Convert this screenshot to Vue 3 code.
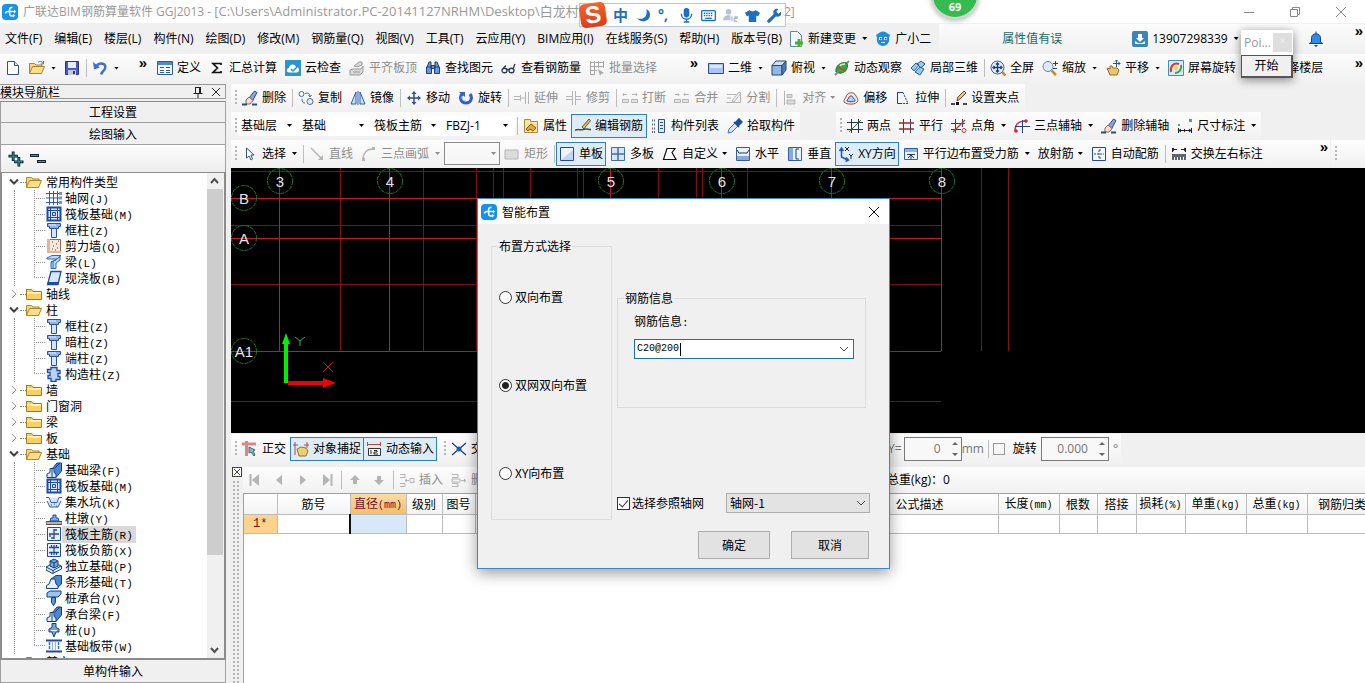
<script setup>
import { ref } from 'vue'

const B = '#2f5b9d'
const G = '#b4b4b4'
const folderOpen = '<path d="M.5 13.500V3.500h5l1.500 1.500h6v2" fill="#f5d682" stroke="#b08326"/><path d="M.5 13.500l3-7h12l-3 7z" fill="#fbe08a" stroke="#b08326"/>'
const column = '<path d="M1.500 1.500h13v3h-2v2h-9v-2h-2z" fill="#8fb4ee" stroke="#28509c"/><path d="M5.500 6.500h5v9h-5z" fill="#d6e6ff" stroke="#28509c"/><path d="M3 3h7" stroke="#e8f2ff"/>'
const raft = '<path d="M1.500 1.500h13v13h-13z" fill="#dceaff" stroke="#1c4ba0" stroke-width="2"/><path d="M4.500 1v14M11.500 1v14M1 4.500h14M1 11.500h14M6.500 6.500h3v3h-3z" fill="none" stroke="#1c4ba0"/>'
const beam = '<path d="M6 15.500V7l5-6h4.500v8L10 15.500z" fill="#4d86cf" stroke="#123f86"/><path d="M1 15.500V12l3-1.500V6.500h4v4l2 1.500v3.500z" fill="#d9ebff" stroke="#123f86"/><path d="M6 7v8M9 6l5-5" stroke="#123f86"/>'
const brush = '<path d="M7 8l5.500-7 2.500 1.500L10.500 11z" fill="#8fa0dd" stroke="#3a4a80"/><path d="M4 10l3-3 4 3.500L8 14H4z" fill="#f5e2bd" stroke="#8a6070"/><path d="M0 14.500h5M10 14.500h5" stroke="#274b8f" stroke-width="2"/>'
const icons = {
  logo: '<rect width="16" height="16" rx="4" fill="#1493ea"/><path d="M3.500 9.500C3.500 8 4.500 7.500 6 7.500h7M10.500 3.500c-3-.5-3 1.500-3 4s0 5 3.500 4.500" fill="none" stroke="#fff" stroke-width="1.500"/><path d="M11 10l2.500 1.500L11 13.500zM12 5.500l2 2-2 2z" fill="#fff"/>',
  new: '<path d="M2.500 1.500h7l4 4v9h-11z" fill="#fff" stroke="#39507e"/><path d="M9.500 1.500v4h4" fill="#cfe0f7" stroke="#39507e"/>',
  open: folderOpen + '<path d="M9 2.500c2-2 4-1 5 1M14.500 1v3h-3" fill="none" stroke="#4a78b8"/>',
  save: '<path d="M1.500 1.500h13v13h-13z" fill="#4a5ac0" stroke="#2a3478"/><path d="M4 2h8v6H4z" fill="#e6ecff"/><path d="M4 10h8v5H4z" fill="#c5cbe0"/><path d="M9 11h2v3H9z" fill="#2a3478"/>',
  undo: '<path d="M4 6.500c4-5 11-3 9 2-.5 2-3 3-4 6" fill="none" stroke="#3f6fd0" stroke-width="2.500"/><path d="M1 2l1 7.500 6-2z" fill="#3f6fd0"/>',
  define: '<path d="M.5 1.500h15v13H.5z" fill="#f4f9ff" stroke="#2f5b9d"/><path d="M1 2h14v3H1z" fill="#4d86d1"/><path d="M3 7.500h4M3 10.500h4M3 12.500h4M9 7.500h4M9 10.500h4M9 12.500h4" stroke="#2f5b9d"/>',
  sum: '<path d="M12 5V3.500H4l4.500 4.500L4 12.500h8V11" fill="none" stroke="#111" stroke-width="1.700"/>',
  cloud: '<path d="M0 0h16v16H0z" fill="#2b95cd"/><path d="M4 12.500c-3 0-3-4 0-4.500 0-4 6-5 7-1 4 0 4 5 1 5.500z" fill="#fff"/><path d="M6 9l2 2 4-4" fill="none" stroke="#2b95cd" stroke-width="1.500"/>',
  align: '<path d="M1 10l3-1h8l2-3v6l-3 3H1zM5 6l5-4h3v3L8 7z" fill="#d8d8d8" stroke="#9d9d9d"/><path d="M4 12h7" stroke="#9d9d9d"/>',
  find: '<path d="M2 7l2-5h2v5M10 7V2h2l2 5M1.500 7h5v6.500h-5zM9.500 7h5v6.500h-5zM6 5.500h4v3H6z" fill="#6c98d4" stroke="#1d3f7c"/>',
  glass: '<path d="M1 10.500c0-3 5-3 5 0s-5 3-5 0zM8 10.500c0-3 5-3 5 0s-5 3-5 0zM6 9.500h2M2 8.500l3-3M12 9l2-5" fill="none" stroke="#2b3650" stroke-width="1.300"/>',
  batch: '<path d="M1.500 1v14M5.500 1v14M9.500 1v7M1 2.500h13M1 6.500h13M1 10.500h7M1 14.500h5M14.500 1v7" fill="none" stroke="#a9a9a9"/><path d="M9 9l6 4-3 1-1 2z" fill="#a9a9a9"/>',
  rect2d: '<path d="M.5 3.500h15v10H.5z" fill="#a8c4fa" stroke="#2d4a9a"/><path d="M2 5h12v3H2z" fill="#dbe7ff"/>',
  cube: '<path d="M1 5.500L5 1h10l-4 4.500z" fill="#cfe3f7" stroke="#27496f"/><path d="M1 5.500h10V15H1z" fill="#8db9e4" stroke="#27496f"/><path d="M11 5.500L15 1v9l-4 5z" fill="#4e80b5" stroke="#27496f"/>',
  orbit: '<path d="M2 12C1 6 7 1 13 3c2 6-3 11-8 10z" fill="#35a84a" stroke="#1d6b33"/><path d="M13 3l2-2M1 15l3-3" stroke="#8a8a8a" stroke-width="2"/><path d="M4 7l8 4" stroke="#c4472e" stroke-width="1.500"/><path d="M6 6c1-2 3-2 5-2" fill="none" stroke="#c8f3b2" stroke-width="1.500"/>',
  local3d: '<path d="M1 8l5-5 3 2-5 6zM7 4l4-3 4 3-4 4zM5 12l5-5 4 2-4 6z" fill="#9cc7e8" stroke="#245d91"/>',
  full: '<circle cx="7.500" cy="7.500" r="6.500" fill="#e2effc" stroke="#426191"/><path d="M12 12l3.500 3.500" stroke="#c98a35" stroke-width="2.500"/><path d="M3 7.500h9M7.500 3v9M6 4.500l1.500-1.500L9 4.500M6 10.500L7.500 12 9 10.500M4.500 6L3 7.500 4.500 9M10.500 6L12 7.500 10.500 9" fill="none" stroke="#203f78" stroke-width="1.300"/>',
  zoom: '<circle cx="6" cy="6.500" r="5" fill="#dcebf7" stroke="#6781a0"/><path d="M9.500 10.500L14 15" stroke="#c98a35" stroke-width="2.500"/><path d="M13.500 1v5M11 3.500h5M11 8.500h4" stroke="#203f78"/>',
  pan: '<path d="M2 8l3 1V6h2l1 2h4l2 2-2 5H5z" fill="#ecc568" stroke="#94682b"/><path d="M11.500 0v7M8 3.500h7M10 1.500L11.500 0 13 1.500M13.500 2L15 3.500 13.500 5" fill="none" stroke="#334d80"/>',
  rotscr: '<path d="M.5.5h15v15H.5z" fill="#d4ebfa" stroke="#3f8ccb"/><path d="M3 12C2 6 6 2 11 4" fill="none" stroke="#d43c2e" stroke-width="2"/><path d="M13 5c1 5-2 8-6 8" fill="none" stroke="#3da13d" stroke-width="2"/><path d="M6 6h4v4H6z" fill="#f6d06a"/>',
  brush,
  copy: '<circle cx="3.500" cy="4" r="2.500" fill="#fff" stroke="#4c6a8c"/><circle cx="12" cy="11.500" r="3" fill="#e3eefa" stroke="#4c6a8c"/><path d="M7 3.500c3-1 5 0 5 3M10.500 5L12 7l1.500-2M4 9c0 3 1 4 3 4" fill="none" stroke="#4c6a8c"/>',
  mirror: '<path d="M6 2v12H1zM10 2v12h5z" fill="#cfe2fa" stroke="#2a5caa"/><path d="M8 1v14" stroke="#2a5caa"/>',
  move: '<path d="M8 2v12M2 8h12" stroke="#31517f" stroke-width="1.500"/><path d="M8 1l2.500 3h-5zM8 15l2.500-3h-5zM1 8l3-2.500v5zM15 8l-3-2.500v5z" fill="#31517f"/>',
  rotate: '<path d="M4 4c-3 4-1 9 4 9s7-5 4-9" fill="none" stroke="#2f62c4" stroke-width="3"/><path d="M1 2h6v5z" fill="#2f62c4"/><path d="M4 6c-1 3 1 5 4 5" fill="none" stroke="#9bc0f6"/>',
  extend: `<path d="M0 6.500h6M0 9.500h6M7 8h4M11.500 2v12M14.500 2v12M6.500 5v6" stroke="${G}" fill="none"/>`,
  trim: `<path d="M0 6.500h6M0 9.500h6M10 6.500h5M10 9.500h5M6.500 1v14M9.500 1v14" stroke="${G}" fill="none"/>`,
  brk: `<path d="M1 4.500h4M2 3L1 4.500 2 6M10 4.500h5M14 3l1 1.500L14 6M.5 9.500h6v3h-6zM9.500 9.500h6v3h-6z" stroke="${G}" fill="#e4e4e4"/>`,
  join: `<path d="M1 4.500h4M4 3l1 1.500L4 6M10 4.500h5M11 3l-1 1.500L11 6M.5 9.500h6v3h-6zM8.500 9.500h6v3h-6z" stroke="${G}" fill="#e4e4e4"/>`,
  split: `<path d="M.5 4.500h10M.5 12.500h14v-8M6 11l7-9 2 1-7 9zM1 8h4" stroke="${G}" fill="none"/>`,
  alignv: `<path d="M2.500 1v14M5 4.500h5v3H5zM5 10h8v4H5z" stroke="${G}" fill="#d8d8d8"/>`,
  offset: '<path d="M1 12c0-3 1-3 2-5 1-5 8-6 10-1 1 2 2 3 2 5-2 4-11 4-14 1z" fill="#fbe4e4" stroke="#8b5560"/><path d="M4 11c0-2 2-2 2-4 2-2 4-1 4 1 2 1 2 2 2 3-2 1-6 1-8 0z" fill="#b7cfee" stroke="#31517f"/>',
  stretch: '<path d="M8 2.500H2.500v11H7" fill="none" stroke="#203f78"/><path d="M8 2.500l5 11H7" stroke="#203f78" stroke-dasharray="2 1" fill="none"/>',
  grip: '<path d="M6 11l1-4 6-6 2 2-6 6z" fill="#e5c98a" stroke="#5b4a2a"/><path d="M0 14h4M12 14h4" stroke="#111" stroke-width="1.500"/><path d="M5 12h3v3H5z" fill="#111"/>',
  prop: '<path d="M1.500 1.500h6v2h7v11h-13z" fill="#fbe3a0" stroke="#b08a3a"/><path d="M3 11l5-5 5 4-3 3-3-2-2 2z" fill="#e9a93c" stroke="#7c5718"/>',
  edit: '<path d="M7 9l7-8 1.500 1.500L9 11z" fill="#e2ba63" stroke="#6d5523"/><path d="M0 12.500c3-2 5 0 8-1s5 0 8 0" fill="none" stroke="#2c5a38" stroke-width="1.500"/>',
  list: '<path d="M1 2.500h4M1 6.500h4M1 10.500h4M1 14h4" stroke="#46689a" stroke-dasharray="1 1" stroke-width="2"/><path d="M7.500 1.500h6v13h-6z" fill="#dbe8fa" stroke="#31517f"/><path d="M9 4.500h3M9 7.500h3M9 10.500h3" stroke="#31517f"/>',
  pick: '<path d="M1 15l1-4 6-6 3 3-6 6z" fill="#d5e8fb" stroke="#3c74b4"/><path d="M7 4l5 5M9 4l3-3 3 3-3 3z" fill="#1d4f96" stroke="#1d4f96" stroke-width="1.500"/>',
  twopt: '<path d="M4.500 1v14M11.500 1v14M0 4.500h16M0 11.500h16" stroke="#27364f"/><path d="M2 14L14 2" stroke="#4a6a4a"/>',
  par: '<path d="M4.500 1v14M11.500 1v14" stroke="#31405a"/><path d="M0 5h15M0 11h15" stroke="#a3262a" stroke-width="1.300"/>',
  angle: '<path d="M4.500 1v14M0 5.500h14M0 11.500h10M11.500 1v8" stroke="#27408a"/><path d="M2 14L14 2" stroke="#c0392b" stroke-width="1.300"/><circle cx="13" cy="12.500" r="2" fill="none" stroke="#c0392b"/>',
  three: '<path d="M1 13c0-7 3-10 11-10" fill="none" stroke="#cc2b36" stroke-width="1.500"/><path d="M8.500 2v13M1 8.500h15" stroke="#27408a"/><circle cx="12" cy="3" r="1.800" fill="#cc2b36"/><circle cx="2" cy="13" r="1.800" fill="#cc2b36"/>',
  dim: '<path d="M1 6h2v2H1zM12 1h3v3h-3z" fill="#58a85a"/><path d="M1.500 10v5M14.500 10v5M2 12.500h12M4 11l-2 1.500L4 14M12 11l2 1.500-2 1.500M7.500 11v3" fill="none" stroke="#222"/>',
  cursor: '<path d="M4.500 2v10l2.500-2 2 4 1.500-1-1.500-4h3z" fill="#fff" stroke="#31517f"/>',
  line: `<path d="M2 2l10 10" stroke="${G}" stroke-width="1.500"/><path d="M14 14v-5l-5 5z" fill="${G}"/>`,
  arc: `<path d="M2 14C2 7 6 3 12 3" fill="none" stroke="${G}" stroke-width="1.500"/><path d="M1 12h3v3H1zM11 1h3v3h-3z" fill="${G}"/>`,
  rectg: `<path d="M1 4h13v9H1z" fill="#dcdcdc" stroke="${G}"/>`,
  single: '<path d="M1.500 1.500h13v13h-13z" fill="#eef4ff" stroke="#2346a0"/><path d="M2 14L14 4v10z" fill="#c0d4fb"/>',
  multi: '<path d="M1.500 1.500h13v13h-13z" fill="#d4e6fb" stroke="#416fa8"/><path d="M8 1v14M1 8h14" stroke="#416fa8" stroke-width="1.500"/>',
  poly: '<path d="M5 2.500h8l-3 4 4 7H1.500z" fill="#fff" stroke="#111" stroke-width="1.200"/>',
  horiz: '<path d="M1.500 1.500h13v13h-13z" fill="#e9f2ff" stroke="#3b5d9b"/><path d="M2 10h12v4H2z" fill="#85a9e0"/><path d="M2 4l2 3h8l2-3" fill="none" stroke="#223a6c"/>',
  vert: '<path d="M1.500 1.500h13v13h-13z" fill="#e9f2ff" stroke="#3b5d9b"/><path d="M2 2h4v12H2z" fill="#85a9e0"/><path d="M12 3H9v10h3" fill="none" stroke="#223a6c"/>',
  xy: '<path d="M3.500 3v8l6 3M1.500 5l2-3 2 3M8 11.500l2.500 2.500-3 1.500" fill="none" stroke="#2456b8" stroke-width="1.500"/><path d="M7 1l4 4M11 1L7 5M11 8l2 2 2-2M13 10v3" fill="none" stroke="#222"/>',
  edge: '<path d="M1.500 2.500h13v11h-13z" fill="#e9f2ff" stroke="#3b5d9b"/><path d="M2 3h12v3H2z" fill="#8fb0e8"/><path d="M4 8.500h8M8 9v4M5 12l3-3 3 3" fill="none" stroke="#223a6c"/>',
  auto: '<path d="M1.500 1.500h13v13h-13z" fill="#f4f8ff" stroke="#2346a0"/><path d="M8 4v8M8 4h3M8 12h3M3 8h10" fill="none" stroke="#2346a0" stroke-dasharray="2 1"/>',
  swap: '<path d="M1.500 2v4M14.500 2v4M2 3.500h4M10 3.500h4M3 2L1 3.500 3 5M13 2l2 1.500L13 5" fill="none" stroke="#222"/><path d="M1 8h14v6H1z" fill="#5c6673"/><path d="M3.500 11v3M6.500 11v3M9.500 11v3M12.500 11v3" stroke="#fff"/>',
  change: '<path d="M2.500.5h7l4 4v11h-11z" fill="#f4fbff" stroke="#5f87ad"/><path d="M11 8v8M7 12h8" stroke="#48b02c" stroke-width="3"/>',
  mascot: '<path d="M1 4l3-2c3-2 5-2 8 0l3 2-1 3c1 4-2 8-6 8s-7-4-6-8z" fill="#1c8fdc"/><path d="M4 6h3v3H4zM9 6h3v3H9z" fill="#fff"/><path d="M5 7h1.500v1.500H5zM10 7h1.500v1.500H10z" fill="#114a86"/><path d="M6 11.500h4" stroke="#fff"/>',
  user: '<rect width="16" height="16" rx="2" fill="#3887b8"/><path d="M6 3h4v4h2l-4 4-4-4h2zM3 10l3 2h4l3-2v3H3z" fill="#fff"/>',
  bell: '<path d="M8 .5v2M3.500 11V6.500C4 1.500 12 1.500 12.500 6.500V11l2 1.500h-13z" fill="#2b8cf0" stroke="#1c3f8c"/><path d="M6 14h4l-2 2z" fill="#1c3f8c"/>',
  plus: '<path d="M5.500 0v10M.5 5h10M11.500 6v10M6.500 11h10" stroke="#123" stroke-width="3"/><path d="M5.500 1v8M1.500 5h8M11.500 7v8M7.500 11h8" stroke="#2fa29a"/>',
  minus: '<path d="M0 4.500h9M7 10.500h9" stroke="#123" stroke-width="3"/><path d="M1 4.500h7M8 10.500h7" stroke="#2fa29a"/>',
  folder: '<path d="M.5 13.500v-10h5l1.500 2h8.500v8z" fill="#fbcf5e" stroke="#a67a20"/><path d="M1 7h14" stroke="#fff1b8" stroke-width="2"/>',
  fopen: folderOpen,
  axis: '<path d="M3.500 1v14M7.500 1v14M11.500 1v14M0 3.500h13M0 8h13M0 12.500h13" stroke="#2c5dae"/><path d="M13 2h3v3h-3zM13 6.500h3v3h-3zM13 11h3v3h-3z" fill="#6c94d4"/>',
  raft, column,
  wall: '<path d="M1.500 1.500h13v13h-13z" fill="#f7e9df" stroke="#a5623e"/><path d="M1 1h3v14H1zM1 13h14v2H1z" fill="#ddb79c"/><path d="M6 4h1M10 6h1M7 8h1M11 10h1M6 11h1M12 3h1M9 12h1" stroke="#444"/>',
  lbeam: '<path d="M1 4l5-2.500h9L11 5H1zM5 8l6-3 3-3v4l-4 3v5.500H5z" fill="#b9dcff" stroke="#2a6bb8"/><path d="M7 7v7M5 8l5-2" stroke="#2a6bb8"/>',
  slab: '<path d="M5 1.500h10l-3 13H1.500z" fill="#d4e8ff" stroke="#1c4ba0" stroke-width="1.300"/><path d="M2 13h10" stroke="#1c4ba0" stroke-width="2"/>',
  gz: '<path d="M5 1.500h6v3h3v3h-2v3h2v3h-4v2H5v-3H2v-3h2v-3H1.500v-3H5z" fill="#b8d2f7" stroke="#1c4ba0" stroke-width="1.300"/>',
  beam,
  pit: '<path d="M0 3.500h3l2 5h6l2-5h3M1 7l3 6h8l3-6" fill="#d4e6fb" stroke="#2f5fae"/><path d="M5 11h1M8 10h1M10 12h1" stroke="#1c4ba0"/>',
  pier: '<path d="M0 11.500h16v3H0z" fill="#b9b3a6" stroke="#5b564b"/><path d="M4 11l1-3h2V5h3v3h2l1 3z" fill="#7fb0e8" stroke="#1c4ba0"/>',
  mainbar: '<path d="M1.500 1.500h13v13h-13z" fill="#eaf2ff" stroke="#1c4ba0"/><path d="M8 3v10M3 8h10M8 4h3M4 8v3M8 12H5" fill="none" stroke="#1c4ba0" stroke-width="1.300"/>',
  negbar: '<path d="M1.500 1.500h13v13h-13z" fill="#eaf2ff" stroke="#1c4ba0"/><path d="M3 5.500h10M3 10.500h10M5.500 3v3M10.500 3v3M5.500 10v3M8 3v10M10.500 10v3" fill="none" stroke="#1c4ba0" stroke-width="1.300"/>',
  iso: '<path d="M0 9l8-4 7.500 3v3l-9 4.500L0 12z" fill="#d9ebff" stroke="#123f86"/><path d="M4 3l4-2 4 2v5L8 10 4 8z" fill="#6fa4e6" stroke="#123f86"/><path d="M0 9l7 3.500L15 8M7 12.500v3M8 5v5M4 3l4 2 4-2" fill="none" stroke="#123f86"/>',
  strip: '<path d="M5 5l5-3.500h5.500V10L11 14z" fill="#4d86cf" stroke="#123f86"/><path d="M.5 14.500v-3L3 10l2-5h4l1 5 2 1.500v3z" fill="#e5f0ff" stroke="#123f86"/>',
  cap: '<path d="M1 3l3-2h11v3l-3 3H1z" fill="#9dc3ef" stroke="#123f86"/><path d="M5.500 7.500h4v5l-2 3-2-3z" fill="#5c94da" stroke="#123f86"/>',
  pile: '<path d="M6 1.500h4v4l3 1.500v3h-3l-2 5-2-5H3V7l3-1.500z" fill="#6fa4e6" stroke="#123f86"/><path d="M5 8.500h6" stroke="#fff"/>',
  band: '<path d="M0 2.500h16M0 13.500h16" stroke="#1c4ba0" stroke-width="2"/><path d="M3.500 4v8M12.500 4v8" stroke="#2f74d0" stroke-dasharray="3 1" stroke-width="1.500"/><path d="M6.500 4v8M9.500 4v8" stroke="#8fb4ee"/>',
  ortho: '<path d="M0 3h14M4.500 0v15" stroke="#d58a8a" stroke-width="3"/><path d="M7 6l6 3-2 1 2 4-1 1-3-4-2 1z" fill="#8fb5c9" stroke="#466"/>',
  snap: '<path d="M2 1v13M14 1v6M0 4h5M11 4h5" stroke="#b94a3a"/><path d="M4 8l4-2 5 1 2 3-2 5H6z" fill="#edcf6c" stroke="#96742b"/>',
  dyn: '<path d="M1 3.500h14M1.500 1v4M14.500 1v4" stroke="#b94a3a"/><path d="M2.500 7.500h12v7h-12z" fill="#fff" stroke="#333"/><path d="M5 9v4M8 9.500h3v1.500H8v2h4" fill="none" stroke="#222"/>',
  cross: '<path d="M1 2l14 12M15 2L1 14" stroke="#1e3f7a" stroke-width="1.300"/><circle cx="8" cy="8" r="2.500" fill="#1d5ab0"/>',
  first: `<path d="M3.500 2v12" stroke="${G}" stroke-width="2"/><path d="M12 2v12L5 8z" fill="${G}"/>`,
  prev: `<path d="M11 3v10L5 8z" fill="${G}"/>`,
  next: `<path d="M5 3v10l6-5z" fill="${G}"/>`,
  last: `<path d="M12.500 2v12" stroke="${G}" stroke-width="2"/><path d="M4 2v12l7-6z" fill="${G}"/>`,
  up: `<path d="M8 3l5 5h-3v4H6V8H3z" fill="${G}"/>`,
  down: `<path d="M8 13l5-5h-3V4H6v4H3z" fill="${G}"/>`,
  ins: `<path d="M1 2.500h5v3H1M1 11.500h5v3H1M6 8.500h4M8 7L6 8.500 8 10M11 6.500h4v4h-4z" fill="none" stroke="${G}"/>`,
  del: `<path d="M1 2.500h6v3H1M1 11.500h6v3H1M1 7h8v3H1zM10 8.500h5M13 7l2 1.500L13 10" fill="none" stroke="${G}"/>`,
  moon: '<path d="M11 1c2 9-4 12-10 10 5 6 14 3 14-4 0-3-2-5-4-6z" fill="#1f6fc0"/>',
  mic: '<rect x="5" y="0" width="6" height="10" rx="3" fill="#1f6fc0"/><path d="M2.500 6c0 8 11 8 11 0M8 12v3M5 15h6" fill="none" stroke="#1f6fc0" stroke-width="1.500"/>',
  keyb: '<rect x=".7" y="2.700" width="14.600" height="10.600" rx="1" fill="#fff" stroke="#1f6fc0" stroke-width="1.400"/><path d="M3 5.500h10M3 8h10" stroke="#1f6fc0" stroke-width="1.600" stroke-dasharray="1.500 1"/><path d="M4.500 11h7" stroke="#1f6fc0" stroke-width="1.400"/>',
  person: '<circle cx="6" cy="4" r="3" fill="#b9c2d4"/><path d="M0 13c0-7 12-7 12 0z" fill="#b9c2d4"/><path d="M8 8h8v8H8z" fill="#fff"/><path d="M9.500 9v5M12 9.500h3V11h-3v3h3" fill="none" stroke="#a5b0c6" stroke-width="1.200"/>',
  shirt: '<path d="M5 2c1 2 5 2 6 0l5 3-2 4-2-1v7H4V8L2 9 0 5z" fill="#1f6fc0"/>',
  wrench: '<path d="M2 14l7-7" stroke="#1f6fc0" stroke-width="3.500" stroke-linecap="round"/><path d="M15 4l-3 2-2-2 2-3c-4-1-6 2-5 5l3 3c3 1 6-1 5-5z" fill="#1f6fc0"/>',
  blank: `<path d="M2 14V5l5-3v12z" fill="#9cc7e8" stroke="${B}"/>`
}

const menus = ['文件(F)', '编辑(E)', '楼层(L)', '构件(N)', '绘图(D)', '修改(M)', '钢筋量(Q)', '视图(V)', '工具(T)', '云应用(Y)', 'BIM应用(I)', '在线服务(S)', '帮助(H)', '版本号(B)']

const b = (i, t, o = {}) => ({ i, t, ...o })
const sep = { sep: true }
const arrow = { arrow: true }
const off = { off: true }
const tight = { arrow: true, tight: true }

const mainTools = [b('define', '定义'), b('sum', '汇总计算'), b('cloud', '云检查'), b('align', '平齐板顶', off), b('find', '查找图元'), b('glass', '查看钢筋量'), b('batch', '批量选择', off)]
const viewTools = [b('rect2d', '二维', arrow), b('cube', '俯视', arrow), b('orbit', '动态观察'), b('local3d', '局部三维'), sep, b('full', '全屏'), b('zoom', '缩放', arrow), b('pan', '平移', arrow), b('rotscr', '屏幕旋转', arrow), b('blank', '选择楼层')]
const editTools = [b('brush', '删除'), sep, b('copy', '复制'), b('mirror', '镜像'), sep, b('move', '移动'), b('rotate', '旋转'), sep, b('extend', '延伸', off), b('trim', '修剪', off), sep, b('brk', '打断', off), b('join', '合并', off), b('split', '分割', off), sep, b('alignv', '对齐', { off: true, arrow: true }), b('offset', '偏移'), b('stretch', '拉伸'), sep, b('grip', '设置夹点')]
const pickers = ['基础层', '基础', '筏板主筋', 'FBZJ-1']
const memberTools = [sep, b('prop', '属性'), b('edit', '编辑钢筋', { on: true }), b('list', '构件列表'), b('pick', '拾取构件')]
const axisTools = [b('twopt', '两点'), b('par', '平行'), b('angle', '点角', arrow), b('three', '三点辅轴', arrow), b('brush', '删除辅轴'), b('dim', '尺寸标注', arrow)]
const drawTools = [b('cursor', '选择', arrow), sep, b('line', '直线', off), b('arc', '三点画弧', { off: true, arrow: true }), { pick: true }, b('rectg', '矩形', off), sep, b('single', '单板', { on: true }), b('multi', '多板'), b('poly', '自定义', tight), b('horiz', '水平'), b('vert', '垂直'), b('xy', 'XY方向', { on: true }), b('edge', '平行边布置受力筋', arrow), b('', '放射筋', tight), b('auto', '自动配筋'), sep, b('swap', '交换左右标注')]
const snapTools = [b('ortho', '正交'), b('snap', '对象捕捉', { on: true }), b('dyn', '动态输入', { on: true })]
const rowTools = [b('first', ''), b('prev', ''), b('next', ''), b('last', ''), sep, b('up', ''), b('down', ''), sep, b('ins', '插入', off), b('del', '删除', off)]

const tree = [
  { t: '常用构件类型', open: true, kids: [['axis', '轴网', 'J'], ['raft', '筏板基础', 'M'], ['column', '框柱', 'Z'], ['wall', '剪力墙', 'Q'], ['lbeam', '梁', 'L'], ['slab', '现浇板', 'B']] },
  { t: '轴线' },
  { t: '柱', open: true, kids: [['column', '框柱', 'Z'], ['column', '暗柱', 'Z'], ['column', '端柱', 'Z'], ['gz', '构造柱', 'Z']] },
  { t: '墙' }, { t: '门窗洞' }, { t: '梁' }, { t: '板' },
  { t: '基础', open: true, kids: [['beam', '基础梁', 'F'], ['raft', '筏板基础', 'M'], ['pit', '集水坑', 'K'], ['pier', '柱墩', 'Y'], ['mainbar', '筏板主筋', 'R'], ['negbar', '筏板负筋', 'X'], ['iso', '独立基础', 'P'], ['strip', '条形基础', 'T'], ['cap', '桩承台', 'V'], ['beam', '承台梁', 'F'], ['pile', '桩', 'U'], ['band', '基础板带', 'W']] },
  { t: '其它' }
]

const dimX = [340, 423, 476, 493, 503, 530, 577, 583, 658, 696, 702, 747, 981, 1008]
const axisX = [['3', 279], ['4', 389], ['5', 610], ['6', 721], ['7', 831], ['8', 941]]
const axisY = [['B', 198], ['A', 238], ['A1', 351]]
const dimY = [171, 225, 284, 401]

const cols = [
  { t: '', w: 33 }, { t: '筋号', w: 73 }, { t: '直径(mm)', w: 56, sel: true }, { t: '级别', w: 36 }, { t: '图号', w: 33 },
  { t: '', w: 366 }, { t: '公式描述', w: 157 }, { t: '长度(mm)', w: 61 }, { t: '根数', w: 38 }, { t: '搭接', w: 39 },
  { t: '损耗(%)', w: 49 }, { t: '单重(kg)', w: 61 }, { t: '总重(kg)', w: 61 }, { t: '钢筋归类', w: 70 }
]

const modes = ['双向布置', '双网双向布置', 'XY向布置']
const mode = ref('双网双向布置')
const rebar = ref('C20@200')
const useAxis = ref(true)
const spin = ref(false)
</script>

<template>
  <div class="app">
    <header class="title">
      <svg class="ic" viewBox="0 0 16 16" v-html="icons.logo"></svg>
      <span class="caption">广联达BIM钢筋算量软件 GGJ2013 - <span class="path">[C:\Users\Administrator.PC-20141127NRHM\Desktop\白龙村-</span></span>
      <div class="winbtns">
        <button aria-label="最小化"><svg viewBox="0 0 12 12"><path d="M1 6.500h10" /></svg></button>
        <button aria-label="还原"><svg viewBox="0 0 12 12"><path d="M1.500 3.500h7v7h-7zM3.500 3.500v-2h7v7h-2" /></svg></button>
        <button aria-label="关闭"><svg viewBox="0 0 12 12"><path d="M1 1l10 10M11 1L1 11" /></svg></button>
      </div>
    </header>

    <nav class="menubar">
      <button v-for="m in menus" :key="m" class="menu">{{ m }}</button>
      <button class="tool change"><svg class="ic" viewBox="0 0 16 16" v-html="icons.change"></svg>新建变更<i class="arr"></i></button>
      <button class="tool"><svg class="ic" viewBox="0 0 16 16" v-html="icons.mascot"></svg>广小二</button>
      <div class="infobar">
        <span class="warn">属性值有误</span>
        <button class="tool account"><svg class="ic" viewBox="0 0 16 16" v-html="icons.user"></svg>13907298339<i class="arr"></i></button>
        <svg class="ic bell" viewBox="0 0 16 16" v-html="icons.bell"></svg>
        <b class="more">»</b>
      </div>
    </nav>

    <div class="bar main">
      <div class="quick">
        <button class="tool" aria-label="新建"><svg class="ic" viewBox="0 0 16 16" v-html="icons.new"></svg></button>
        <button class="tool" aria-label="打开"><svg class="ic" viewBox="0 0 16 16" v-html="icons.open"></svg><i class="arr"></i></button>
        <button class="tool" aria-label="保存"><svg class="ic" viewBox="0 0 16 16" v-html="icons.save"></svg></button>
        <i class="sep"></i>
        <button class="tool" aria-label="撤销"><svg class="ic" viewBox="0 0 16 16" v-html="icons.undo"></svg><i class="arr"></i></button>
        <b class="more">»</b>
      </div>
      <div class="commands">
        <button v-for="x in mainTools" :key="x.t" class="tool" :class="{ off: x.off }"><svg class="ic" viewBox="0 0 16 16" v-html="icons[x.i]"></svg>{{ x.t }}</button>
        <b class="more">»</b>
      </div>
      <div class="views">
        <template v-for="(x, n) in viewTools" :key="n">
          <i v-if="x.sep" class="sep"></i>
          <button v-else class="tool"><svg class="ic" viewBox="0 0 16 16" v-html="icons[x.i]"></svg>{{ x.t }}<i v-if="x.arrow" class="arr"></i></button>
        </template>
        <b class="more">»</b>
      </div>
    </div>

    <div class="body">
      <aside class="side">
        <div class="sidehead">
          <span>模块导航栏</span>
          <svg viewBox="0 0 12 12"><path d="M3.500 1v6M8.500 1v6M3 1.500h6M7.500 1v6M1.500 7.500h9M6 8v4" /></svg>
          <svg viewBox="0 0 12 12"><path d="M2 2l8 8M10 2l-8 8" /></svg>
        </div>
        <button class="section">工程设置</button>
        <button class="section">绘图输入</button>
        <div class="treetools">
          <svg class="ic" viewBox="0 0 17 16" v-html="icons.plus"></svg>
          <svg class="ic" viewBox="0 0 16 16" v-html="icons.minus"></svg>
        </div>
        <div class="treebox">
          <ul class="tree">
            <li v-for="(g, n) in tree" :key="n">
              <div class="node">
                <svg class="chev" :class="{ shut: !g.open }" viewBox="0 0 10 16"><path :d="g.open ? 'M1 5.500l4 4 4-4' : 'M3 4l4 4-4 4'" /></svg>
                <i class="stub"></i>
                <svg class="ic" viewBox="0 0 16 16" v-html="g.open ? icons.fopen : icons.folder"></svg>
                <span>{{ g.t }}</span>
              </div>
              <ul v-if="g.kids" class="kids">
                <li v-for="(k, m) in g.kids" :key="m" class="leaf" :class="{ last: m === g.kids.length - 1, cur: k[2] === 'R' }">
                  <i class="link"></i>
                  <svg class="ic" viewBox="0 0 16 16" v-html="icons[k[0]]"></svg>
                  <span>{{ k[1] }}<code>({{ k[2] }})</code></span>
                </li>
              </ul>
            </li>
          </ul>
          <div class="scroll">
            <svg viewBox="0 0 15 16"><path d="M4 10l3.500-4 3.500 4" /></svg>
            <div class="thumb"></div>
            <svg viewBox="0 0 15 16"><path d="M4 6l3.500 4L11 6" /></svg>
          </div>
        </div>
        <button class="section foot">单构件输入</button>
      </aside>

      <main class="work">
        <div class="row">
          <div class="bar edits">
            <i class="dots"></i>
            <template v-for="(x, n) in editTools" :key="n">
              <i v-if="x.sep" class="sep"></i>
              <button v-else class="tool" :class="{ off: x.off }"><svg class="ic" viewBox="0 0 16 16" v-html="icons[x.i]"></svg>{{ x.t }}<i v-if="x.arrow" class="arr tight"></i></button>
            </template>
          </div>
        </div>
        <div class="row">
          <div class="bar members">
            <i class="dots"></i>
            <label v-for="(p, n) in pickers" :key="p" class="picker" :class="{ small: n === 0 }">
              <select :aria-label="p"><option>{{ p }}</option></select><i class="arr"></i>
            </label>
            <template v-for="(x, n) in memberTools" :key="n">
              <i v-if="x.sep" class="sep"></i>
              <button v-else class="tool" :class="{ on: x.on }"><svg class="ic" viewBox="0 0 16 16" v-html="icons[x.i]"></svg>{{ x.t }}</button>
            </template>
          </div>
          <div class="bar axes">
            <i class="dots"></i>
            <button v-for="x in axisTools" :key="x.t" class="tool"><svg class="ic" viewBox="0 0 16 16" v-html="icons[x.i]"></svg>{{ x.t }}<i v-if="x.arrow" class="arr"></i></button>
          </div>
        </div>
        <div class="row">
          <div class="bar draws">
            <i class="dots"></i>
            <template v-for="(x, n) in drawTools" :key="n">
              <i v-if="x.sep" class="sep"></i>
              <label v-else-if="x.pick" class="picker boxed"><select aria-label="画弧方式" disabled></select><i class="arr"></i></label>
              <button v-else class="tool" :class="{ on: x.on, off: x.off }"><svg v-if="x.i" class="ic" viewBox="0 0 16 16" v-html="icons[x.i]"></svg>{{ x.t }}<i v-if="x.arrow" class="arr" :class="{ tight: x.tight }"></i></button>
            </template>
            <b class="more">»</b>
          </div>
          <div class="bar rest"><i class="dots"></i></div>
        </div>

        <svg class="canvas" role="img" aria-label="绘图区">
          <g transform="translate(-231 -168)">
            <g class="dimline">
              <path v-for="x in dimX" :key="x" :d="`M${x + 0.5} 168V351`" />
              <path v-for="y in dimY" :key="y" :d="`M231 ${y + 0.5}H941`" />
            </g>
            <g class="axline">
              <path v-for="a in axisX" :key="a[0]" :d="`M${a[1] + 0.5} 168V351`" />
              <path v-for="a in axisY" :key="a[0]" :d="`M231 ${a[1] + 0.5}H941`" />
            </g>
            <g class="bubble">
              <template v-for="a in axisX" :key="a[0]"><circle :cx="a[1] + 1" cy="181" r="12.500" /><text :x="a[1] + 1" y="187">{{ a[0] }}</text></template>
              <template v-for="a in axisY" :key="a[0]"><circle cx="244" :cy="a[1]" r="12.500" /><text x="244" :y="a[1] + 6">{{ a[0] }}</text></template>
            </g>
            <path d="M284 383V344h-2l4-11 4 11h-2v39z" fill="#00f000" />
            <path d="M288 381h35v-3l13 5-13 5v-3h-35z" fill="#f00000" />
            <path d="M295 337l5 4 5-4M300 341v5" fill="none" stroke="#2db52d" />
            <path d="M323 362l10 10M333 362l-10 10" fill="none" stroke="#c01818" />
          </g>
        </svg>

        <div class="row status">
          <div class="bar snaps">
            <i class="dots"></i>
            <button v-for="x in snapTools" :key="x.t" class="tool" :class="{ on: x.on }"><svg class="ic" viewBox="0 0 16 16" v-html="icons[x.i]"></svg>{{ x.t }}</button>
            <i class="dots second"></i>
            <button class="tool"><svg class="ic" viewBox="0 0 16 16" v-html="icons.cross"></svg>交点</button>
            <div class="coords">
              <label for="ycoord">Y=</label>
              <span class="spin"><input id="ycoord" value="0" disabled><svg viewBox="0 0 8 20"><path d="M4 3l3 3H1zM4 17l3-3H1z" /></svg></span>
              <span>mm</span>
              <i class="sep"></i>
              <label class="rot"><input v-model="spin" type="checkbox" class="tick">旋转</label>
              <span class="spin wide"><input aria-label="旋转角度" value="0.000" disabled><svg viewBox="0 0 8 20"><path d="M4 3l3 3H1zM4 17l3-3H1z" /></svg></span>
              <span>°</span>
            </div>
          </div>
        </div>

        <section class="dock">
          <div class="handle">
            <svg viewBox="0 0 10 10"><path d="M0 0h10v10H0z" fill="#fff" /><path d="M.5.5h9v9h-9zM2 2l6 6M8 2L2 8" /></svg>
            <i></i>
          </div>
          <div class="sheet">
            <div class="bar sheettools">
              <template v-for="(x, n) in rowTools" :key="n">
                <i v-if="x.sep" class="sep"></i>
                <button v-else class="tool" :class="{ off: x.off, nav: !x.t }" :aria-label="x.t || x.i"><svg class="ic" viewBox="0 0 16 16" v-html="icons[x.i]"></svg>{{ x.t }}</button>
              </template>
              <span class="total">总重(kg)：0</span>
            </div>
            <div class="grid">
              <table>
                <colgroup><col v-for="(c, n) in cols" :key="n" :style="{ width: c.w + 'px' }"></colgroup>
                <thead><tr><th v-for="(c, n) in cols" :key="n" :class="{ sel: c.sel }">{{ c.t.split('(')[0] }}<code v-if="c.t.includes('(')">({{ c.t.split('(')[1] }}</code></th></tr></thead>
                <tbody><tr><td v-for="(c, n) in cols" :key="n" :class="{ no: n === 0, sel: c.sel }">{{ n === 0 ? '1*' : '' }}</td></tr></tbody>
              </table>
            </div>
          </div>
        </section>
      </main>
    </div>

    <div class="ime">
      <span class="sogou">S</span>
      <b>中</b>
      <svg class="ic" viewBox="0 0 16 16" v-html="icons.moon"></svg>
      <b class="punct">°,</b>
      <svg v-for="n in ['mic', 'keyb', 'person', 'shirt', 'wrench']" :key="n" class="ic" viewBox="0 0 16 16" v-html="icons[n]"></svg>
    </div>
    <span class="imetail">2]</span>
    <div class="ball">69</div>

    <div class="mini">
      <div class="minihead"><span>Poi...</span><i>×</i></div>
      <button>开始</button>
    </div>

    <div class="dialog" role="dialog" aria-labelledby="dlg">
      <div class="dlghead">
        <svg class="ic" viewBox="0 0 16 16" v-html="icons.logo"></svg>
        <span id="dlg">智能布置</span>
        <button aria-label="关闭"><svg viewBox="0 0 12 12"><path d="M1 1l10 10M11 1L1 11" /></svg></button>
      </div>
      <div class="dlgbody">
        <fieldset class="modes">
          <legend>布置方式选择</legend>
          <label v-for="m in modes" :key="m"><input v-model="mode" type="radio" name="mode" :value="m">{{ m }}</label>
        </fieldset>
        <div class="right">
          <fieldset class="info">
            <legend>钢筋信息</legend>
            <label for="rebar">钢筋信息<code>:</code></label>
            <div class="combo">
              <input id="rebar" v-model="rebar"><i class="caret"></i>
              <svg viewBox="0 0 10 6"><path d="M1 1l4 4 4-4" /></svg>
            </div>
          </fieldset>
          <div class="axispick">
            <label><input v-model="useAxis" type="checkbox" class="tick">选择参照轴网</label>
            <div class="drop">
              <select aria-label="参照轴网"><option>轴网-1</option></select>
              <svg viewBox="0 0 10 6"><path d="M1 1l4 4 4-4" /></svg>
            </div>
          </div>
          <div class="actions">
            <button class="ok">确定</button>
            <button class="cancel">取消</button>
          </div>
        </div>
      </div>
    </div>
  </div>
</template>

<style>
html, body { margin: 0; background: #f0f0f0; }
</style>

<style scoped>
* { box-sizing: border-box; }
.app { position: relative; display: flex; flex-direction: column; height: 100vh; overflow: hidden; background: #f0f0f0; color: #000; font: 12px/16px "Open Sans", "Noto Sans CJK SC", sans-serif; white-space: nowrap; }
button, select, input { font: inherit; color: inherit; margin: 0; padding: 0; border: 0; background: none; border-radius: 0; outline: 0; }
i { font-style: normal; display: block; }
code { font: 11px/14px "Liberation Mono", monospace; }
svg { display: block; flex: none; fill: none; stroke: none; }
.ic { width: 16px; height: 16px; }

.title { display: flex; align-items: center; height: 23px; flex: none; padding-left: 2px; gap: 5px; background: #fff; color: #999; }
.path { font-size: 13px; }
.winbtns { display: flex; gap: 34px; margin-left: auto; padding-right: 18px; }
.winbtns svg { width: 12px; height: 12px; stroke: #888; }

.menubar { display: flex; align-items: center; height: 31px; flex: none; padding-left: 5px; }
.menu { margin-right: 12px; }
.change { margin-left: -10px; }
.infobar { display: flex; align-items: center; flex: 1; height: 30px; margin-left: 4px; padding-left: 63px; background: linear-gradient(#fcfcfc, #f0f0f0); }
.warn { color: #1b6b67; margin-right: 66px; }
.bell { margin-left: 65px; }
.more { font: bold 15px/12px "Liberation Sans", sans-serif; align-self: flex-start; margin-top: 1px; }
.infobar .more { margin-left: auto; padding-right: 2px; }

.bar { display: flex; align-items: center; background: linear-gradient(#fdfdfd, #f1f1f1); }
.tool { display: flex; align-items: center; gap: 4px; height: 24px; padding: 0 3px; border: 1px solid transparent; }
.tool.off { color: #8d8d8d; }
.tool.on { border-color: #2a80cc; background: #deecf8; }
.arr { width: 5px; height: 3px; margin-left: 2px; background: currentColor; clip-path: polygon(0 0, 100% 0, 50% 100%); }
.arr.tight { margin-left: 0; }
.sep { width: 1px; height: 18px; margin: 0 1px 0 2px; background: #bdbdbd; flex: none; }
.dots { width: 2px; height: 16px; flex: none; margin: 0 1px 0 4px; background: repeating-linear-gradient(#b5b5b5 0 2px, transparent 2px 4px); }

.main { height: 28px; flex: none; }
.quick { display: flex; align-items: center; width: 153px; padding-left: 1px; }
.quick .more, .commands .more, .views .more { margin-left: auto; padding-right: 6px; }
.commands { display: flex; align-items: center; width: 551px; }
.views { display: flex; align-items: center; flex: 1; }
.views .more { padding-right: 2px; }

.body { display: flex; flex: 1; min-height: 0; padding-top: 1px; }
.side { display: flex; flex-direction: column; width: 226px; margin-right: 5px; flex: none; padding-top: 1px; font-family: "Noto Sans CJK SC", sans-serif; }
.sidehead { display: flex; align-items: center; gap: 6px; height: 15px; margin-bottom: 2px; border: 1px solid #999; border-left: 0; padding-right: 3px; }
.sidehead span { flex: 1; }
.sidehead svg { width: 12px; height: 12px; stroke: #222; }
.section { height: 22px; flex: none; border: 1px solid #a0a0a0; border-top-color: #8a8a8a; }
.section + .section { border-top: 0; }
.foot { height: 24px; }
.treetools { display: flex; align-items: center; gap: 6px; height: 27px; flex: none; padding-left: 7px; background: linear-gradient(#fdfdfd, #ededed); border: 1px solid #a0a0a0; border-width: 0 1px; }
.treebox { display: flex; flex: 1; min-height: 0; border: 1px solid #8c8c8c; border-right-width: 2px; border-left-width: 2px; background: #fff; }
.tree { flex: 1; margin: 0; padding: 1px 0 0; overflow: hidden; list-style: none; }
.node { display: flex; align-items: center; height: 16px; padding-left: 7px; }
.chev { width: 10px; height: 16px; stroke: #404040; stroke-width: 2; }
.chev.shut { stroke: #999; stroke-width: 1; }
.stub { width: 6px; margin-left: 1px; border-top: 1px dotted #888; }
.node .ic { margin-right: 4px; }
.kids { margin: 0 0 0 12px; padding: 0 0 0 19px; list-style: none; border-left: 1px dotted #888; }
.leaf { display: flex; align-items: center; height: 16px; }
.link { width: 12px; height: 16px; flex: none; background: linear-gradient(90deg, #999 50%, transparent 50%) 0 8px / 2px 1px repeat-x, linear-gradient(#999 50%, transparent 50%) 0 0 / 1px 2px repeat-y; }
.last .link { height: 8px; align-self: flex-start; background: linear-gradient(90deg, #999 50%, transparent 50%) 0 7px / 2px 1px repeat-x, linear-gradient(#999 50%, transparent 50%) 0 0 / 1px 2px repeat-y; }
.leaf span { padding: 0 3px; }
.leaf.cur span { background: #d9d9d9; }
.scroll { display: flex; flex-direction: column; width: 17px; background: #f0f0f0; }
.scroll svg { width: 15px; height: 16px; stroke: #505050; stroke-width: 2; }
.thumb { flex: 1; margin: 0 1px 87px 0; background: #cdcdcd; }

.work { display: flex; flex-direction: column; flex: 1; min-width: 0; }
.row { display: flex; height: 28px; flex: none; padding-top: 1px; }
.row .bar { height: 27px; }
.edits { padding-right: 2px; }
.members { padding-right: 1px; }
.axes { margin-left: 36px; padding-right: 1px; }
.draws { flex: 1; }
.draws .on { padding: 0 2px; }
.draws .more { margin-left: auto; padding-right: 2px; }
.rest { width: 34px; margin-left: 1px; }
.picker { display: grid; align-items: center; width: 72px; }
.picker.small { width: 61px; }
.picker select { grid-area: 1 / 1; width: 100%; height: 20px; padding-left: 3px; appearance: none; background: #fff; }
.picker .arr { grid-area: 1 / 1; justify-self: end; margin-right: 7px; pointer-events: none; }
.picker.boxed { width: 56px; height: 23px; border: 1px solid #8a8a8a; color: #888; }
.picker.boxed select { background: #f8f8f8; }
.picker.boxed .arr { margin-right: 3px; }

.canvas { width: 100%; height: 265px; background: #000; margin-top: 1px; }
.dimline { stroke: #8b0c0c; }
.axline { stroke: #cf1616; }
.bubble circle { stroke: #1e7a1e; stroke-dasharray: 4 1; }
.bubble text { fill: #e4e4e4; font: 15px "Liberation Sans", sans-serif; text-anchor: middle; }

.status { height: 34px; }
.status .bar { height: 29px; padding-right: 3px; }
.snaps .on { padding: 0 2px; }
.snaps .on + .on { margin-left: -1px; }
.second { margin-left: 7px; }
.coords { display: flex; align-items: center; margin-left: 389px; color: #777; }
.coords .sep { margin: 0 4px; }
.spin { display: flex; align-items: center; width: 58px; height: 24px; margin-left: 2px; border: 1px solid #7a7a7a; background: #f8f8f8; }
.spin.wide { width: 68px; margin: 0 4px; }
.spin input { flex: 1; width: 0; text-align: right; padding-right: 10px; }
.spin svg { width: 8px; height: 20px; margin-right: 2px; fill: #666; }
.rot { display: flex; align-items: center; gap: 8px; color: #000; }
.tick { appearance: none; width: 12px; height: 12px; border: 1px solid #999; }

.dock { display: flex; flex: 1; min-height: 0; }
.handle { display: flex; flex-direction: column; align-items: center; gap: 4px; width: 12px; }
.handle svg { width: 10px; height: 10px; stroke: #443; }
.handle i { flex: 1; width: 8px; background: radial-gradient(circle at 1px 1px, #b5b5b5 1px, transparent 1px) 0 0 / 4px 4px; }
.sheet { display: flex; flex-direction: column; flex: 1; min-width: 0; }
.sheettools { height: 26px; flex: none; }
.total { margin-left: 388px; }
.grid { flex: 1; min-height: 0; overflow: hidden; background: #fff; border: 1px solid #a0a0a0; border-width: 1px 0 0 1px; font-family: "Noto Sans CJK SC", sans-serif; }
table { width: 1133px; table-layout: fixed; border-collapse: collapse; }
th, td { height: 19px; padding: 0; border: 1px solid #bcbcbc; border-top: 0; border-left: 0; font-weight: 400; text-align: center; overflow: hidden; line-height: 18px; }
th { height: 20px; background: linear-gradient(#fff, #f3f3f3); }
th code { font-size: 10px; }
th.sel { background: linear-gradient(#fbdca4, #f5bd68); color: #6b1030; }
td.no { background: #fbd38a; color: #6b1030; font-family: "Liberation Mono", monospace; }
td.sel { background: #d6e8fa; border-left: 2px solid #111; }

.ime { position: absolute; left: 579px; top: 3px; display: flex; align-items: center; gap: 7px; width: 207px; height: 24px; background: #fff; border: 1px solid #b9c6dc; color: #1f6fc0; }
.ime b { font-size: 15px; width: 16px; }
.ime .punct { width: 14px; font-size: 14px; }
.ime .ic { width: 15px; height: 15px; }
.sogou { display: grid; place-items: center; width: 26px; height: 24px; border-radius: 5px; background: linear-gradient(#f5642c, #dd3d14); color: #fff; font: bold 24px/24px "Liberation Sans", sans-serif; transform: rotate(-8deg); }
.imetail { position: absolute; left: 784px; top: 4px; color: #999; }
.ball { position: absolute; left: 931px; top: -29px; width: 48px; height: 48px; border-radius: 50%; border: 2px solid #cfd8cf; background: #35bb4e; box-shadow: 0 2px 5px #8889; color: #fff; text-align: center; font: bold 11px/15px "Open Sans", sans-serif; padding-top: 26px; }

.mini { position: absolute; left: 1241px; top: 30px; width: 52px; background: #fff; box-shadow: 0 2px 9px #0007; }
.minihead { display: flex; align-items: center; justify-content: space-between; height: 25px; padding: 0 1px 0 3px; color: #999; }
.minihead i { width: 19px; height: 19px; background: #dedede; color: #eee; text-align: center; }
.mini button { display: block; width: 100%; height: 23px; border: 1px solid #555; border-bottom-width: 2px; border-right-width: 2px; background: #f0f0f0; }

.dialog { position: absolute; left: 477px; top: 198px; width: 413px; background: #f0f0f0; border: 1px solid #3a86d4; box-shadow: 0 4px 14px #0006; font-family: "Noto Sans CJK SC", sans-serif; }
.dlghead { display: flex; align-items: center; gap: 5px; height: 25px; padding: 0 9px 0 3px; background: #fff; }
.dlghead button { margin-left: auto; }
.dlghead button svg { width: 12px; height: 12px; stroke: #111; }
.dlgbody { display: flex; gap: 5px; padding: 15px 19px 9px 13px; }
fieldset { margin: 0; min-width: 0; border: 1px solid #dcdcdc; }
legend { padding: 0 1px; line-height: 14px; }
.modes { width: 122px; height: 281px; padding: 0 0 0 7px; margin-bottom: 39px; }
.modes legend { margin-left: -1px; }
.modes label { display: flex; align-items: center; gap: 3px; height: 88px; }
.modes input { appearance: none; width: 13px; height: 13px; border: 1px solid #333; border-radius: 50%; background: #fff; }
.modes input:checked { background: radial-gradient(circle, #222 0 3px, #fff 4px); }
.right { flex: 1; display: flex; flex-direction: column; padding-top: 52px; }
.info { width: 249px; height: 117px; padding: 8px 11px 0 16px; }
.info legend { margin-left: -10px; }
.combo { display: flex; align-items: center; height: 20px; margin-top: 9px; padding: 0 4px 0 2px; border: 1px solid #1a6fb8; background: #fff; }
.combo input { width: 43px; font: 10px/16px "Liberation Mono", monospace; }
.combo svg { width: 10px; height: 6px; margin-left: auto; stroke: #444; }
.caret { width: 1px; height: 13px; background: #000; }
.axispick { display: flex; align-items: center; justify-content: space-between; margin: 85px 0 0; width: 253px; }
.axispick label { display: flex; align-items: center; gap: 2px; }
.axispick .tick { width: 13px; height: 13px; border-color: #333; background: #fff; }
.axispick .tick:checked { position: relative; }
.axispick .tick:checked::after { content: ""; position: absolute; left: 3px; top: 0; width: 4px; height: 8px; border: solid #333; border-width: 0 1px 1px 0; transform: rotate(40deg); }
.drop { display: grid; align-items: center; width: 144px; height: 20px; border: 1px solid #adadad; background: #e3e3e3; }
.drop select { grid-area: 1 / 1; appearance: none; padding-left: 3px; height: 18px; line-height: 16px; }
.drop svg { grid-area: 1 / 1; justify-self: end; width: 10px; height: 6px; margin-right: 3px; stroke: #444; pointer-events: none; }
.actions { display: flex; justify-content: flex-end; gap: 21px; width: 252px; margin-top: 18px; }
.actions button { width: 78px; height: 28px; border: 1px solid #adadad; background: #e2e2e2; }
.actions .ok { width: 72px; }
</style>
